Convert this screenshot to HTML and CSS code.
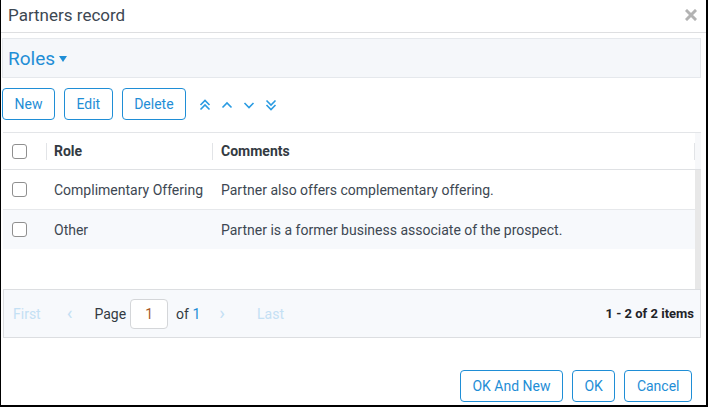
FILE: index.html
```html
<!DOCTYPE html>
<html lang="en">
<head>
    <meta charset="UTF-8">
    <meta name="viewport" content="width=device-width, initial-scale=1.0">
    <title>Partners record</title>
    <link rel="stylesheet" href="styles.css">
</head>
<body>
    <div class="dialog">
        <!-- Title bar -->
        <div class="titlebar">
            <span class="title">Partners record</span>
            <svg class="close" width="12" height="12" viewBox="0 0 12 12">
                <path d="M2 2 L10 10 M10 2 L2 10" stroke="#b3b3b3" stroke-width="3" stroke-linecap="square"/>
            </svg>
        </div>

        <div class="content">
            <div class="panel">
                <span class="panel-title">Roles</span>
                <span class="caret"></span>
            </div>

            <div class="toolbar">
                <button class="btn">New</button>
                <button class="btn">Edit</button>
                <button class="btn">Delete</button>
                <div class="moves">
                    <svg width="14" height="14" viewBox="0 0 14 14"><path d="M2.5 7 L7 2.5 L11.5 7 M2.5 11.5 L7 7 L11.5 11.5" fill="none" stroke="#2a9be2" stroke-width="1.6"/></svg>
                    <svg width="14" height="14" viewBox="0 0 14 14"><path d="M2.5 9.5 L7 5 L11.5 9.5" fill="none" stroke="#2a9be2" stroke-width="1.6"/></svg>
                    <svg width="14" height="14" viewBox="0 0 14 14"><path d="M2.5 5 L7 9.5 L11.5 5" fill="none" stroke="#2a9be2" stroke-width="1.6"/></svg>
                    <svg width="14" height="14" viewBox="0 0 14 14"><path d="M2.5 2.5 L7 7 L11.5 2.5 M2.5 7 L7 11.5 L11.5 7" fill="none" stroke="#2a9be2" stroke-width="1.6"/></svg>
                </div>
            </div>

            <div class="grid">
                <div class="grid-head">
                    <div class="cell col-check"><span class="check"></span></div>
                    <div class="cell col-role">Role</div>
                    <div class="cell col-comments">Comments</div>
                    <div class="head-gutter"></div>
                </div>
                <div class="grid-body">
                    <div class="rows">
                        <div class="row">
                            <div class="cell col-check"><span class="check"></span></div>
                            <div class="cell col-role">Complimentary Offering</div>
                            <div class="cell col-comments">Partner also offers complementary offering.</div>
                        </div>
                        <div class="row alt">
                            <div class="cell col-check"><span class="check"></span></div>
                            <div class="cell col-role">Other</div>
                            <div class="cell col-comments">Partner is a former business associate of the prospect.</div>
                        </div>
                    </div>
                    <div class="scrollbar"></div>
                </div>
                <div class="pager">
                    <span class="pg-link first">First</span>
                    <span class="pg-link prev">&lsaquo;</span>
                    <span class="pg-label">Page</span>
                    <span class="pg-input">1</span>
                    <span class="pg-label">of <span class="blue">1</span></span>
                    <span class="pg-link next">&rsaquo;</span>
                    <span class="pg-link last">Last</span>
                    <span class="pg-info">1 - 2 of 2 items</span>
                </div>
            </div>
        </div>

        <div class="footer">
            <button class="btn">OK And New</button>
            <button class="btn">OK</button>
            <button class="btn">Cancel</button>
        </div>
    </div>
</body>
</html>
```

FILE: styles.css
```css
body {
    margin: 0;
    font-family: Roboto, "Liberation Sans", sans-serif;
    background-color: #fff;
}

.dialog {
    width: 708px;
    height: 407px;
    box-sizing: border-box;
    border-left: 1px solid #000;
    border-right: 2px solid #000;
    border-bottom: 2px solid #000;
    display: flex;
    flex-direction: column;
}

.titlebar {
    height: 32px;
    border-bottom: 1px solid #dedfe1;
    display: flex;
    align-items: center;
    justify-content: space-between;
    padding: 0 9px 0 7px;
    flex-shrink: 0;
}

.title {
    font-size: 17px;
    color: #3d4752;
    margin-top: -3px;
}

.close {
    margin-top: -3px;
}

.content {
    padding: 5px 5px 0 1px;
}

.panel {
    height: 38px;
    border: 1px solid #e5e8ec;
    background-color: #f5f7fa;
    display: flex;
    align-items: center;
    padding-left: 5px;
}

.panel-title {
    font-size: 19px;
    color: #1f8ed6;
}

.caret {
    width: 0;
    height: 0;
    border-left: 4px solid transparent;
    border-right: 4px solid transparent;
    border-top: 6px solid #1f8ed6;
    margin-left: 4px;
    margin-top: 2px;
}

.toolbar {
    display: flex;
    align-items: center;
    gap: 9px;
    margin-top: 10px;
}

.btn {
    height: 32px;
    padding: 0 11.5px;
    border: 1px solid #1f8ed6;
    border-radius: 4px;
    background-color: #fff;
    color: #1f8ed6;
    font-family: Roboto, "Liberation Sans", sans-serif;
    font-size: 14px;
}

.moves {
    display: flex;
    gap: 8px;
    margin-left: 3px;
    margin-top: 2px;
}

.grid {
    margin-top: 12px;
    border-top: 1px solid #e3e5e8;
    margin-left: 1px;
}

.grid-head {
    display: flex;
    height: 36px;
    border-bottom: 1px solid #dfe1e4;
    font-weight: bold;
    font-size: 14px;
    color: #333a42;
}

.grid-head .cell {
    position: relative;
}

.grid-head .col-role::before,
.grid-head .col-comments::before {
    content: "";
    position: absolute;
    left: 0;
    top: 10px;
    height: 17px;
    border-left: 1px solid #e2e4e7;
}

.grid-head .col-comments::after {
    content: "";
    position: absolute;
    right: 0;
    top: 10px;
    height: 17px;
    border-left: 1px solid #e2e4e7;
}

.head-gutter {
    width: 6px;
    background-color: #f7f8fa;
}

.cell {
    display: flex;
    align-items: center;
    box-sizing: border-box;
}

.col-check {
    width: 43px;
    padding-left: 9px;
}

.col-role {
    width: 166px;
    padding-left: 8px;
}

.col-comments {
    flex: 1;
    padding-left: 9px;
}

.check {
    width: 13px;
    height: 13px;
    border: 1px solid #8f8f8f;
    border-radius: 3px;
    background-color: #fff;
}

.grid-body {
    display: flex;
    height: 119px;
}

.rows {
    flex: 1;
}

.row {
    display: flex;
    height: 39px;
    border-bottom: 1px solid #e6e8eb;
    font-size: 14px;
    color: #3d4752;
}

.row.alt {
    background-color: #f7f9fc;
    border-bottom: none;
}

.scrollbar {
    width: 6px;
    background-color: #e8e8e8;
}

.pager {
    height: 47px;
    border: 1px solid #dcdee1;
    background-color: #f7f9fc;
    display: flex;
    align-items: center;
    font-size: 14px;
    color: #333a42;
    padding: 0 6px 0 9px;
}

.pg-link {
    color: #c4e0f4;
}

.first {
    margin-right: 26px;
}

.prev,
.next {
    font-size: 19px;
    line-height: 1;
    margin-top: -2px;
}

.prev {
    margin-right: 22px;
}

.pg-input {
    width: 38px;
    height: 30px;
    box-sizing: border-box;
    border: 1px solid #d4d6d9;
    border-radius: 4px;
    background-color: #fff;
    display: flex;
    align-items: center;
    justify-content: center;
    color: #a8592a;
    margin: 0 8px 0 4px;
}

.blue {
    color: #1f8ed6;
}

.next {
    margin-left: 19px;
    margin-right: 32px;
}

.pg-info {
    margin-left: auto;
    font-weight: bold;
    font-size: 13px;
    color: #1f2328;
}

.footer {
    margin-top: auto;
    display: flex;
    justify-content: flex-end;
    gap: 9px;
    padding: 0 14px 3px 0;
}
```
